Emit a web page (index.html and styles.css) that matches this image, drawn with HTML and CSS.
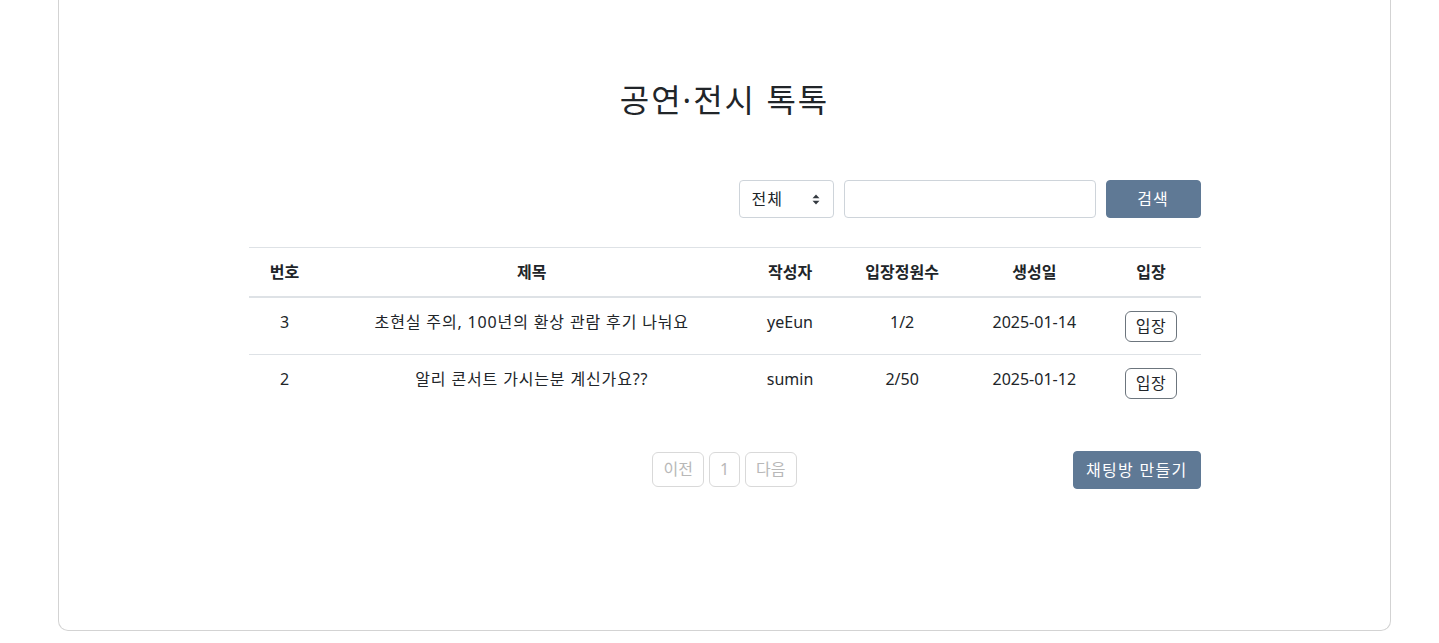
FILE: index.html
```html
<!DOCTYPE html>
<html lang="ko">
<head>
  <meta charset="UTF-8">
  <meta name="viewport" content="width=device-width, initial-scale=1.0">
  <title>공연·전시 톡톡</title>
  <link rel="stylesheet" href="styles.css">
</head>
<body>

  <div class="card">
    <h2 class="page-title">공연·전시 톡톡</h2>

    <div class="board">
      <form class="search-bar" onsubmit="return false">
        <div class="select-wrap">
          <select class="search-select">
            <option selected>전체</option>
            <option>제목</option>
            <option>작성자</option>
          </select>
          <svg class="select-arrow" width="8" height="11" viewBox="0 0 8 11">
            <path d="M4 0.5 L7.5 4.3 L0.5 4.3 Z" fill="#343a40"/>
            <path d="M4 10.5 L7.5 6.7 L0.5 6.7 Z" fill="#343a40"/>
          </svg>
        </div>
        <input class="search-input" type="text">
        <button class="btn btn-main search-btn">검색</button>
      </form>

      <table class="room-table">
        <colgroup>
          <col style="width:72px">
          <col style="width:422px">
          <col style="width:94px">
          <col style="width:130px">
          <col style="width:134px">
          <col style="width:99px">
        </colgroup>
        <thead>
          <tr>
            <th>번호</th>
            <th>제목</th>
            <th>작성자</th>
            <th>입장정원수</th>
            <th>생성일</th>
            <th>입장</th>
          </tr>
        </thead>
        <tbody>
          <tr>
            <td>3</td>
            <td class="room-title">초현실 주의, 100년의 환상 관람 후기 나눠요</td>
            <td>yeEun</td>
            <td>1/2</td>
            <td>2025-01-14</td>
            <td><button class="btn-enter">입장</button></td>
          </tr>
          <tr>
            <td>2</td>
            <td class="room-title">알리 콘서트 가시는분 계신가요??</td>
            <td>sumin</td>
            <td>2/50</td>
            <td>2025-01-12</td>
            <td><button class="btn-enter">입장</button></td>
          </tr>
        </tbody>
      </table>

      <div class="board-footer">
        <div class="pagination">
          <button class="page-btn" disabled>이전</button>
          <button class="page-btn" disabled>1</button>
          <button class="page-btn" disabled>다음</button>
        </div>
        <button class="btn btn-main create-btn">채팅방 만들기</button>
      </div>
    </div>
  </div>

</body>
</html>
```

FILE: styles.css
```css
body {
  margin: 0;
  background-color: white;
  color: #212529;
  font-family: "Noto Sans", "Noto Sans CJK KR", sans-serif;
  font-size: 16px;
  line-height: 24px;
}

.card {
  box-sizing: border-box;
  width: 1333px;
  margin-left: 58px;
  padding-top: 81px;
  padding-bottom: 141px;
  border: 1px solid #d3d3d3;
  border-top: none;
  border-radius: 0 0 10px 10px;
}

.page-title {
  margin: 0;
  font-size: 32px;
  font-weight: 400;
  line-height: 38px;
  letter-spacing: 2px;
  text-align: center;
}

.board {
  width: 952px;
  margin: 0 auto;
}

/* search */
.search-bar {
  display: flex;
  justify-content: flex-end;
  gap: 10px;
  margin-top: 61px;
}
.select-wrap {
  position: relative;
}
.search-select {
  appearance: none;
  box-sizing: border-box;
  width: 95px;
  height: 38px;
  padding: 0 12px;
  border: 1px solid #ced4da;
  border-radius: 4px;
  background: white;
  color: #212529;
  font-family: inherit;
  font-size: 16px;
  letter-spacing: 1px;
}
.select-arrow {
  position: absolute;
  right: 14px;
  top: 14px;
  pointer-events: none;
}
.search-input {
  box-sizing: border-box;
  width: 252px;
  height: 38px;
  padding: 0 12px;
  border: 1px solid #ced4da;
  border-radius: 4px;
  font-family: inherit;
  font-size: 16px;
}

.btn {
  box-sizing: border-box;
  border-radius: 4px;
  font-family: inherit;
  font-size: 16px;
  line-height: 24px;
  cursor: pointer;
}
.btn-main {
  border: 1px solid #5f7995;
  background-color: #5f7995;
  color: white;
}
.search-btn {
  width: 95px;
  height: 38px;
  padding: 0;
  letter-spacing: 1px;
}

/* table */
.room-table {
  width: 100%;
  margin-top: 29px;
  border-collapse: collapse;
  table-layout: fixed;
  border-top: 1px solid #dee2e6;
}
.room-table th,
.room-table td {
  padding: 12px 0;
  text-align: center;
  vertical-align: top;
}
.room-table th {
  font-weight: 700;
  border-bottom: 2px solid #dee2e6;
}
.room-table tbody tr {
  border-bottom: 1px solid #dee2e6;
}
.room-table tbody tr:last-child {
  border-bottom: none;
}
.room-table td.room-title {
  letter-spacing: 0.85px;
}
.btn-enter {
  box-sizing: border-box;
  height: 31px;
  margin-top: 1px;
  padding: 3px 10px;
  border: 1px solid #6c757d;
  border-radius: 6px;
  background: white;
  color: #212529;
  font-family: inherit;
  font-size: 16px;
  line-height: 23px;
  letter-spacing: 0.5px;
  cursor: pointer;
}

/* footer */
.board-footer {
  display: grid;
  grid-template-columns: 1fr auto 1fr;
  align-items: start;
  margin-top: 40px;
}
.pagination {
  grid-column: 2;
  display: flex;
  gap: 5px;
  margin-top: 1px;
}
.page-btn {
  box-sizing: border-box;
  height: 35px;
  padding: 4px 10px;
  border: 1px solid #d9d9d9;
  border-radius: 6px;
  background: white;
  color: #b8b8b8;
  font-family: inherit;
  font-size: 16px;
  line-height: 25px;
}
.create-btn {
  grid-column: 3;
  justify-self: end;
  height: 38px;
  padding: 6px 12px;
  letter-spacing: 1.3px;
}
```
